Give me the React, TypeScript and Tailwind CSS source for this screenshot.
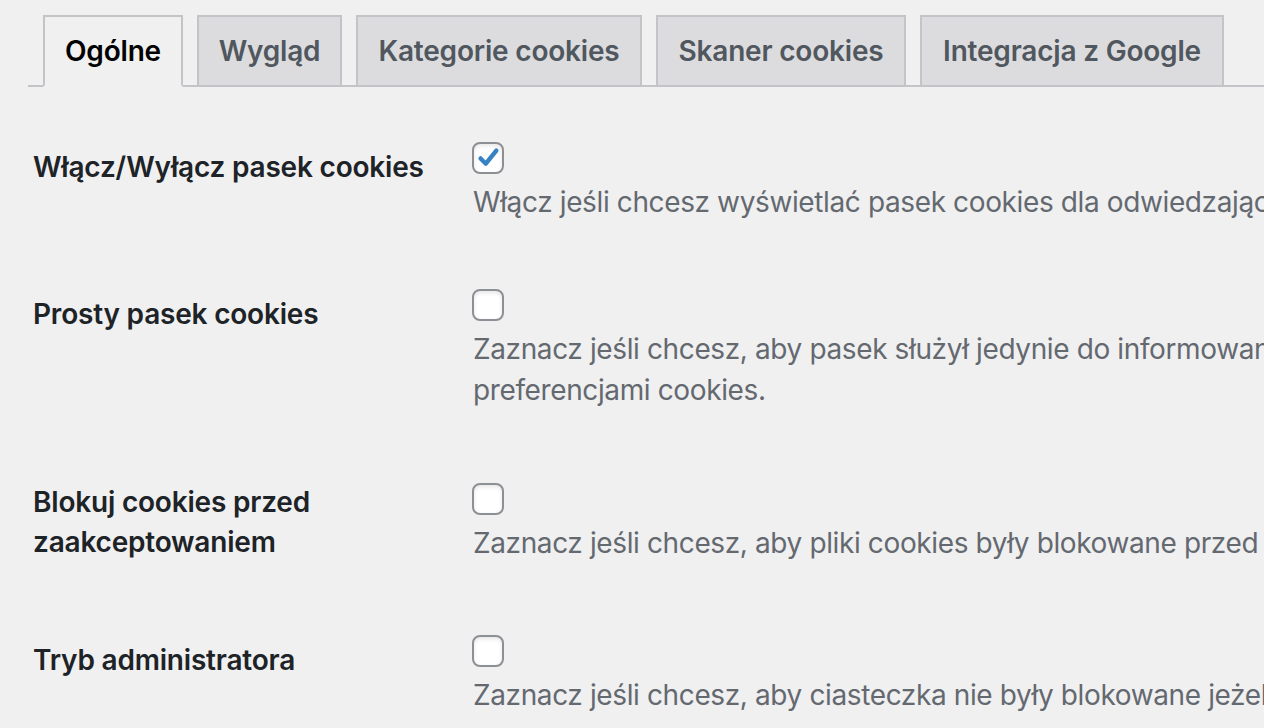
const tabs = [
  { label: 'Ogólne', w: 'w-[140px]', active: true },
  { label: 'Wygląd', w: 'w-[145px]', active: false },
  { label: 'Kategorie cookies', w: 'w-[286px]', active: false },
  { label: 'Skaner cookies', w: 'w-[250px]', active: false },
  { label: 'Integracja z Google', w: 'w-[304px]', active: false },
];

function Checkbox({ checked }: { checked?: boolean }) {
  return (
    <span className="flex h-8 w-8 items-center justify-center rounded-lg border-2 border-[#8c8f94] bg-white shadow-[inset_0_2px_4px_rgba(0,0,0,0.1)]">
      {checked && (
        <svg viewBox="0 0 32 32" className="h-8 w-8" fill="none">
          <path
            d="M7.5 16.5 L13.5 22.5 L25.5 7.5"
            stroke="#3582c4"
            strokeWidth="5"
            strokeLinecap="round"
            strokeLinejoin="round"
          />
        </svg>
      )}
    </span>
  );
}

function Row({
  label,
  checked,
  lines,
  thClass,
}: {
  label: string[];
  checked?: boolean;
  lines: string[];
  thClass: string;
}) {
  return (
    <div className="flex">
      <div className={`w-[439px] shrink-0 ${thClass}`}>
        {label.map((l) => (
          <div
            key={l}
            className="text-[28px] font-semibold leading-[40px] tracking-[-0.2px] text-[#1d2327]"
          >
            {l}
          </div>
        ))}
      </div>
      <div className="self-center py-[33px]">
        <Checkbox checked={checked} />
        <div className="mt-2 pl-px">
          {lines.map((l) => (
            <p
              key={l}
              className="whitespace-nowrap text-[28px] leading-[41px] tracking-[-0.38px] text-[#646970]"
            >
              {l}
            </p>
          ))}
        </div>
      </div>
    </div>
  );
}

export default function App() {
  return (
    <div className="h-[728px] w-full overflow-hidden bg-[#f0f0f1] font-['Inter','Noto_Sans',sans-serif]">
      <div className="ml-[28px] flex gap-[14px] border-b-2 border-[#c3c4c7] pl-[15px] pt-[15px]">
        {tabs.map((t) => (
          <div
            key={t.label}
            className={`-mb-[2px] flex h-[72px] shrink-0 items-center justify-center border-2 text-[28px] font-semibold tracking-[-0.2px] ${t.w} ${
              t.active
                ? 'border-[#c3c4c7] border-b-[#f0f0f1] bg-[#f0f0f1] text-black'
                : 'border-[#c3c4c7] bg-[#dcdcde] text-[#50575e]'
            }`}
          >
            {t.label}
          </div>
        ))}
      </div>

      <div className="mt-[22px] pl-[33px]">
        <Row
          label={['Włącz/Wyłącz pasek cookies']}
          checked
          thClass="pt-[38px]"
          lines={['Włącz jeśli chcesz wyświetlać pasek cookies dla odwiedzających stronę.']}
        />
        <Row
          label={['Prosty pasek cookies']}
          thClass="pt-[38px]"
          lines={[
            'Zaznacz jeśli chcesz, aby pasek służył jedynie do informowania o cookies, bez zarządzania',
            'preferencjami cookies.',
          ]}
        />
        <Row
          label={['Blokuj cookies przed', 'zaakceptowaniem']}
          thClass="pt-[38px] pb-[40px]"
          lines={['Zaznacz jeśli chcesz, aby pliki cookies były blokowane przed zaakceptowaniem.']}
        />
        <Row
          label={['Tryb administratora']}
          thClass="pt-[38px]"
          lines={['Zaznacz jeśli chcesz, aby ciasteczka nie były blokowane jeżeli jesteś zalogowany.']}
        />
      </div>
    </div>
  );
}
